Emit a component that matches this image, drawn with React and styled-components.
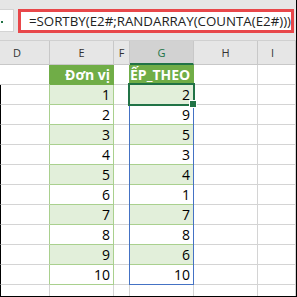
import React from 'react'
import styled, { createGlobalStyle } from 'styled-components'

const GlobalStyle = createGlobalStyle`
body {
  margin: 0;
  background: #ffffff;
}
`;

const GREEN = "#70ad47";
const BAND = "#e2efda";
const BAND_LINE = "#a9d08e";
const GRID = "#d4d4d4";
const DARK_GREEN = "#217346";
const COLS = "50px 64px 16px 64px 64px 1fr";

const Frame = styled.div`
width: 297px;
height: 297px;
box-sizing: border-box;
overflow: hidden;
border-right: 1px solid #000;
border-bottom: 1px solid #000;
background: #fff;
font-family: "Open Sans", "Liberation Sans", sans-serif;
`;

const FormulaBar = styled.div`
height: 41px;
box-sizing: border-box;
background: #e6e6e6;
border-bottom: 1px solid #d0d0d0;
display: flex;
align-items: flex-start;
gap: 4px;
padding: 9px 2px 0 0;
`;

const NameBox = styled.div`
width: 14px;
height: 23px;
box-sizing: border-box;
background: #fff;
border: 1px solid #d4d4d4;
border-left: none;
display: flex;
align-items: center;
padding-left: 1px;
`;

const NameMark = styled.span`
width: 2px;
height: 2px;
background: ${DARK_GREEN};
margin-top: 2px;
`;

const FormulaBox = styled.div`
flex: 1;
height: 24px;
box-sizing: border-box;
background: #fff;
border: 3px solid #e8474a;
display: flex;
align-items: center;
padding-left: 8px;
font-size: 13.3px;
color: #222;
white-space: nowrap;
`;

const ColumnHeads = styled.div`
display: grid;
grid-template-columns: ${COLS};
height: 24px;
`;

const ColumnHead = styled.div`
box-sizing: border-box;
background: ${p => (p.$active ? "#d2d2d2" : "#e6e6e6")};
border-right: 1px solid #c8c8c8;
border-bottom: ${p => (p.$active ? `2px solid ${DARK_GREEN}` : "1px solid #c8c8c8")};
color: ${p => (p.$active ? DARK_GREEN : "#333")};
font-size: 11px;
display: flex;
align-items: center;
justify-content: ${p => p.$start ? "flex-start" : "center"};
padding-left: ${p => p.$start ? "13px" : "0"};
`;

const Sheet = styled.div`
position: relative;
`;

const Row = styled.div`
display: grid;
grid-template-columns: ${COLS};
height: 20px;
`;

const Cell = styled.div`
box-sizing: border-box;
background: ${p => p.$bg || "#fff"};
border-right: 1px solid ${p => p.$right || GRID};
border-bottom: 1px solid ${p => p.$bottom || GRID};
border-left: ${p => (p.$frame ? "1px solid #000" : "none")};
color: ${p => p.$color || "#000"};
font-weight: ${p => (p.$bold ? 700 : 400)};
font-size: 14px;
line-height: 20px;
text-align: right;
padding-right: 3px;
white-space: nowrap;
overflow: hidden;
`;

const SpillRange = styled.div`
position: absolute;
left: 129px;
top: 19px;
width: 65px;
height: 201px;
box-sizing: border-box;
border: 1px solid #4472c4;
pointer-events: none;
`;

const ActiveCell = styled.div`
position: absolute;
left: 128px;
top: 18px;
width: 67px;
height: 23px;
box-sizing: border-box;
border: 2px solid ${DARK_GREEN};
pointer-events: none;
`;

const FillHandle = styled.div`
position: absolute;
right: -4px;
bottom: -4px;
width: 6px;
height: 6px;
background: ${DARK_GREEN};
border: 1px solid #fff;
`;

const units = [1, 2, 3, 4, 5, 6, 7, 8, 9, 10];
const sorted = [2, 9, 5, 3, 4, 1, 7, 8, 6, 10];

const App = () => {
  return (
    <Frame>
      <GlobalStyle />
      <FormulaBar>
        <NameBox><NameMark /></NameBox>
        <FormulaBox>=SORTBY(E2#;RANDARRAY(COUNTA(E2#)))</FormulaBox>
      </FormulaBar>
      <ColumnHeads>
        <ColumnHead $start>D</ColumnHead>
        <ColumnHead>E</ColumnHead>
        <ColumnHead>F</ColumnHead>
        <ColumnHead $active>G</ColumnHead>
        <ColumnHead>H</ColumnHead>
        <ColumnHead $start>I</ColumnHead>
      </ColumnHeads>
      <Sheet>
        <Row>
          <Cell $right={GREEN} />
          <Cell $bg={GREEN} $right={GREEN} $bottom={GREEN} $color="#fff" $bold>Đơn vị</Cell>
          <Cell $right={GREEN} />
          <Cell $bg={GREEN} $right={GREEN} $bottom={GREEN} $color="#fff" $bold>ẾP_THEO</Cell>
          <Cell />
          <Cell />
        </Row>
        {units.map((u, i) => {
          const bg = i % 2 === 0 ? BAND : "#fff";
          return (
            <Row key={u}>
              <Cell $frame $right={BAND_LINE} />
              <Cell $bg={bg} $right={BAND_LINE} $bottom={BAND_LINE}>{u}</Cell>
              <Cell />
              <Cell $bg={bg} $bottom={BAND_LINE}>{sorted[i]}</Cell>
              <Cell />
              <Cell />
            </Row>
          )
        })}
        <Row>
          <Cell $frame />
          <Cell />
          <Cell />
          <Cell />
          <Cell />
          <Cell />
        </Row>
        <SpillRange />
        <ActiveCell>
          <FillHandle />
        </ActiveCell>
      </Sheet>
    </Frame>
  )
}

export default App
